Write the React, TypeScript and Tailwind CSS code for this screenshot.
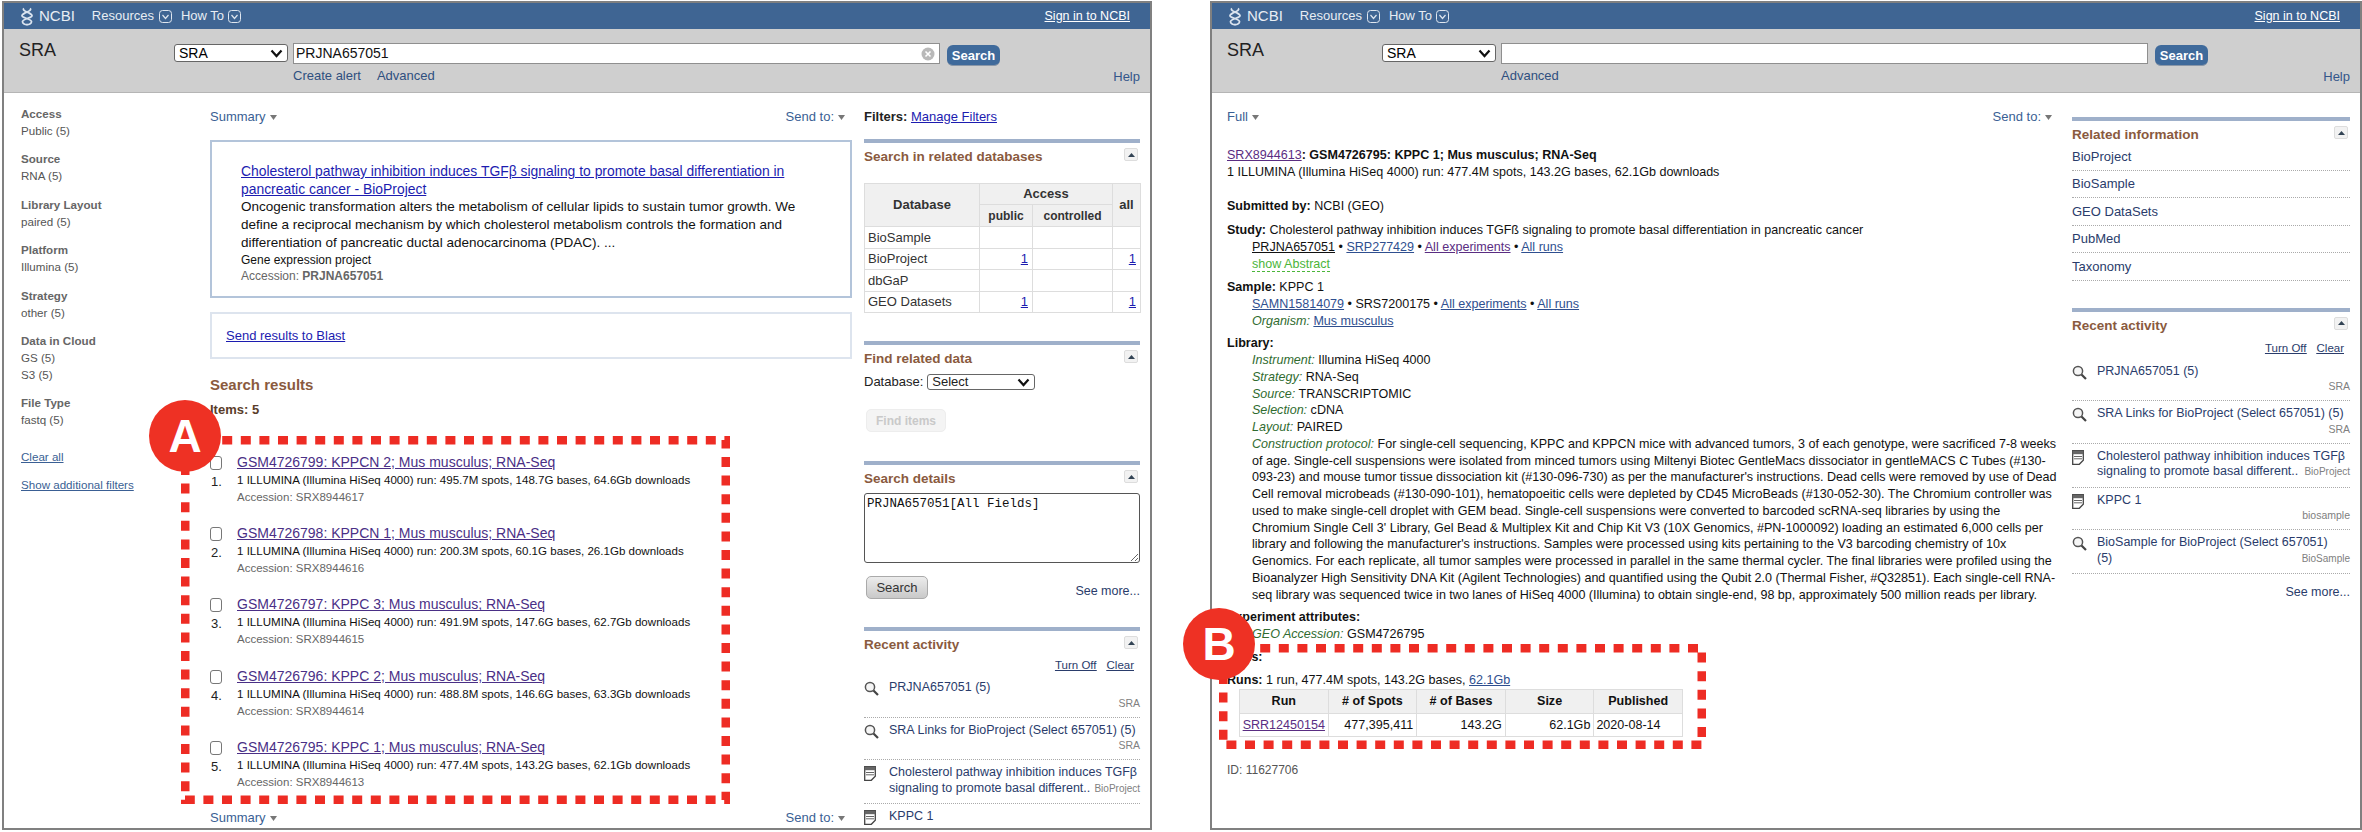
import type { ReactNode } from 'react';

const Chevron = () => (
  <svg width="13" height="13" viewBox="0 0 13 13" fill="none" className="shrink-0">
    <rect x="0.5" y="0.5" width="12" height="12" rx="3" stroke="#dfe6ef" />
    <path d="M3.5 5 6.5 8.5 9.5 5" stroke="#dfe6ef" strokeWidth="1.2" />
  </svg>
);

const Caret = () => (
  <svg width="7" height="5" viewBox="0 0 7 5" className="ml-1 inline-block">
    <path d="M0 0h7L3.5 5z" fill="#777" />
  </svg>
);

const Helix = () => (
  <svg width="16" height="19" viewBox="0 0 16 19" fill="none" className="shrink-0">
    <path d="M11 1.5C14 4 4 5.5 3 8.5c-.8 2.4 9 3 9.5 6 .3 2-3 3.5-5 3" stroke="#dbe4ef" strokeWidth="1.8" />
    <path d="M5 1.5C2 4 12 5.5 13 8.5c.8 2.4-9 3-9.5 6-.3 2 3 3.5 5 3" stroke="#dbe4ef" strokeWidth="1.8" />
  </svg>
);

const SelectBox = ({ label, className }: { label: string; className: string }) => (
  <div className={`flex items-center justify-between bg-white border border-[#666] rounded-[3px] pl-1 pr-1 ${className}`}>
    <span>{label}</span>
    <svg width="13" height="9" viewBox="0 0 13 9" fill="none">
      <path d="M1.5 1.5 6.5 7 11.5 1.5" stroke="#111" strokeWidth="2.2" />
    </svg>
  </div>
);

const Header = ({ value, links, clear }: { value: string; links: ReactNode; clear?: boolean }) => (
  <>
    {/* top bar */}
    <div className="h-[26px] bg-[#3f6593] flex items-center pl-[15px] pr-[20px] text-[13px] text-[#e8edf3]">
      <Helix />
      <span className="ml-[4px] text-[15px] font-light">NCBI</span>
      <span className="ml-[17px]">Resources</span>
      <span className="ml-[5px]"><Chevron /></span>
      <span className="ml-[9px]">How To</span>
      <span className="ml-[4px]"><Chevron /></span>
      <a className="ml-auto underline text-white text-[12.5px]">Sign in to NCBI</a>
    </div>
    {/* search band */}
    <div className="h-[64px] bg-[#cfcfcf] border-b border-[#b5b5b5] flex">
      <div className="w-[170px] pl-[15px] pt-[11px] text-[18px] leading-[20px] text-[#222]">SRA</div>
      <div className="w-[119px] pt-[15px]">
        <SelectBox label="SRA" className="w-[114px] h-[18px] text-[14px]" />
      </div>
      <div className="w-[654px] pt-[14px]">
        <div className="w-[647px] h-[21px] bg-white border border-[#8f8f8f] flex items-center pl-[2px] pr-[4px] text-[14px] text-[#111]">
          <input readOnly value={value} className="flex-1 outline-none bg-transparent min-w-0" />
          {clear && (
            <svg width="14" height="14" viewBox="0 0 14 14">
              <circle cx="7" cy="7" r="6.5" fill="#b9b9b9" />
              <path d="M4.5 4.5l5 5m0-5l-5 5" stroke="#fff" strokeWidth="1.6" />
            </svg>
          )}
        </div>
        <div className="mt-[3px] h-[18px] flex gap-[16px] text-[13px] leading-[18px] text-[#2f4f7f]">{links}</div>
      </div>
      <div className="flex-1 pt-[16px] pr-[10px] flex flex-col">
        <button className="w-[53px] h-[21px] rounded-[6px] bg-[#3f6a9b] border-b border-[#8a97a8] text-white font-bold text-[13px] leading-[19px]">
          Search
        </button>
        <span className="mt-[1px] self-end leading-[18px] text-[13px] text-[#34568a] pt-[1px]">Help</span>
      </div>
    </div>
  </>
);

const Collapse = () => (
  <span className="w-[14px] h-[13px] mr-[2px] bg-[#f2f2f2] border border-[#ddd] rounded-[2px] flex items-center justify-center shrink-0">
    <svg width="7" height="4" viewBox="0 0 7 4"><path d="M0 4h7L3.5 0z" fill="#345" /></svg>
  </span>
);

const Portlet = ({ title, className }: { title: string; className: string }) => (
  <div className={className}>
    <div className="h-[4px] bg-[#9fb0ca]" />
    <div className="mt-[5px] h-[18px] flex justify-between items-start text-[13.5px] leading-[18px] font-bold text-[#8a5a3e]">
      <span>{title}</span>
      <Collapse />
    </div>
  </div>
);

const Magnifier = () => (
  <svg width="15" height="15" viewBox="0 0 15 15" fill="none" className="mt-[1px]">
    <circle cx="6" cy="6" r="4.6" stroke="#555" strokeWidth="1.5" fill="#f6f6f6" />
    <path d="M9.5 9.5 14 14" stroke="#444" strokeWidth="2.2" />
  </svg>
);

const Doc = () => (
  <svg width="12" height="15" viewBox="0 0 12 15" fill="none" className="mt-[1px]">
    <path d="M.7.7h10.6v9.6l-4 4H.7z" stroke="#444" strokeWidth="1.3" fill="#fff" />
    <path d="M.7.7h10.6v3.5H.7z" fill="#666" />
    <path d="M2 6.5h8M2 8.8h8" stroke="#666" />
  </svg>
);

type Activity = { icon: 'search' | 'doc'; lines: string[]; label: string; inline?: boolean };

const ActivityRow = ({ item }: { item: Activity }) => (
  <div className="flex pt-[5px] pb-[7px] border-b border-dotted border-[#aaa]">
    <div className="w-[25px] shrink-0">{item.icon === 'search' ? <Magnifier /> : <Doc />}</div>
    <div className="flex-1 min-w-0 text-[12.5px] leading-[15.5px] text-[#2a3c6b]">
      {item.lines.map((line, i) =>
        item.inline && i === item.lines.length - 1 ? (
          <div key={line} className="flex justify-between items-baseline whitespace-nowrap">
            <span>{line}</span>
            <span className="text-[10px] text-[#808080]">{item.label}</span>
          </div>
        ) : (
          <div key={line} className="whitespace-nowrap">{line}</div>
        )
      )}
      {!item.inline && item.label && <div className="text-right text-[10.5px] leading-[14px] text-[#808080]">{item.label}</div>}
    </div>
  </div>
);

const TurnOff = ({ className }: { className: string }) => (
  <div className={`h-[16px] flex justify-end gap-[10px] pr-[6px] text-[11.5px] leading-[16px] text-[#2a3c6b] underline ${className}`}>
    <a>Turn Off</a>
    <a>Clear</a>
  </div>
);

const filters = [
  { name: 'Access', items: ['Public (5)'] },
  { name: 'Source', items: ['RNA (5)'] },
  { name: 'Library Layout', items: ['paired (5)'] },
  { name: 'Platform', items: ['Illumina (5)'] },
  { name: 'Strategy', items: ['other (5)'] },
  { name: 'Data in Cloud', items: ['GS (5)', 'S3 (5)'] },
  { name: 'File Type', items: ['fastq (5)'] },
];

const results = [
  ['GSM4726799: KPPCN 2; Mus musculus; RNA-Seq', '495.7M spots, 148.7G bases, 64.6Gb downloads', 'SRX8944617'],
  ['GSM4726798: KPPCN 1; Mus musculus; RNA-Seq', '200.3M spots, 60.1G bases, 26.1Gb downloads', 'SRX8944616'],
  ['GSM4726797: KPPC 3; Mus musculus; RNA-Seq', '491.9M spots, 147.6G bases, 62.7Gb downloads', 'SRX8944615'],
  ['GSM4726796: KPPC 2; Mus musculus; RNA-Seq', '488.8M spots, 146.6G bases, 63.3Gb downloads', 'SRX8944614'],
  ['GSM4726795: KPPC 1; Mus musculus; RNA-Seq', '477.4M spots, 143.2G bases, 62.1Gb downloads', 'SRX8944613'],
];

const leftActivity: Activity[] = [
  { icon: 'search', lines: ['PRJNA657051 (5)'], label: 'SRA' },
  { icon: 'search', lines: ['SRA Links for BioProject (Select 657051) (5)'], label: 'SRA' },
  { icon: 'doc', lines: ['Cholesterol pathway inhibition induces TGFβ', 'signaling to promote basal different..'], label: 'BioProject', inline: true },
  { icon: 'doc', lines: ['KPPC 1'], label: '' },
];

const rightActivity: Activity[] = [
  leftActivity[0],
  leftActivity[1],
  leftActivity[2],
  { icon: 'doc', lines: ['KPPC 1'], label: 'biosample' },
  { icon: 'search', lines: ['BioSample for BioProject (Select 657051)', '(5)'], label: 'BioSample', inline: true },
];

const protocol = [
  'For single-cell sequencing, KPPC and KPPCN mice with advanced tumors, 3 of each genotype, were sacrificed 7-8 weeks',
  'of age. Single-cell suspensions were isolated from minced tumors using Miltenyi Biotec GentleMacs dissociator in gentleMACS C Tubes (#130-',
  "093-23) and mouse tumor tissue dissociation kit (#130-096-730) as per the manufacturer's instructions. Dead cells were removed by use of Dead",
  'Cell removal microbeads (#130-090-101), hematopoeitic cells were depleted by CD45 MicroBeads (#130-052-30). The Chromium controller was',
  'used to make single-cell droplet with GEM bead. Single-cell suspensions were converted to barcoded scRNA-seq libraries by using the',
  "Chromium Single Cell 3' Library, Gel Bead & Multiplex Kit and Chip Kit V3 (10X Genomics, #PN-1000092) loading an estimated 6,000 cells per",
  "library and following the manufacturer's instructions. Samples were processed using kits pertaining to the V3 barcoding chemistry of 10x",
  'Genomics. For each replicate, all tumor samples were processed in parallel in the same thermal cycler. The final libraries were profiled using the',
  'Bioanalyzer High Sensitivity DNA Kit (Agilent Technologies) and quantified using the Qubit 2.0 (Thermal Fisher, #Q32851). Each single-cell RNA-',
  'seq library was sequenced twice in two lanes of HiSeq 4000 (Illumina) to obtain single-end, 98 bp, approximately 500 million reads per library.',
];

const Green = ({ children }: { children: ReactNode }) => <i className="text-[#2f6b2f]">{children}</i>;
const BlueLink = ({ children }: { children: ReactNode }) => <a className="text-[#2f4f8f] underline">{children}</a>;

const Line = ({ children, className = '' }: { children: ReactNode; className?: string }) => (
  <div className={`h-[17px] leading-[17px] whitespace-nowrap ${className}`}>{children}</div>
);

const SpecLine = ({ label, value }: { label: string; value: string }) => (
  <div className="h-[16.75px] leading-[16.75px] whitespace-nowrap">
    <Green>{label}</Green> {value}
  </div>
);

const LeftPanel = () => (
  <div className="w-[1150px] h-[829px] ml-[2px] mt-[1px] border-2 border-[#808080] overflow-hidden">
    <Header
      value="PRJNA657051"
      clear
      links={
        <>
          <a>Create alert</a>
          <a>Advanced</a>
        </>
      }
    />
    <div className="flex">
      {/* filters */}
      <div className="w-[206px] pl-[17px] pt-[12px] text-[11.6px] leading-[17px] text-[#555]">
        {filters.map((f) => (
          <div key={f.name} className="mb-[11.4px]">
            <div className="font-bold text-[#666]">{f.name}</div>
            {f.items.map((t) => (
              <div key={t}>{t}</div>
            ))}
          </div>
        ))}
        <div className="mt-[20px] text-[#3a5f94] underline">Clear all</div>
        <div className="mt-[11px] text-[#3a5f94] underline">Show additional filters</div>
      </div>
      {/* results */}
      <div className="w-[642px] pt-[15px]">
        <div className="h-[18px] flex justify-between pr-[7px] text-[13px] leading-[18px] text-[#3a5f94]">
          <span>Summary<Caret /></span>
          <span>Send to:<Caret /></span>
        </div>
        <div className="mt-[14px] h-[158px] border-2 border-[#b3c4da] pl-[29px] pt-[20px] text-[13.5px] leading-[18px] text-[#111]">
          <a className="text-[13.9px] text-[#1c1cb0] underline block">
            Cholesterol pathway inhibition induces TGFβ signaling to promote basal differentiation in
            <br />
            pancreatic cancer - BioProject
          </a>
          <p>
            Oncogenic transformation alters the metabolism of cellular lipids to sustain tumor growth. We
            <br />
            define a reciprocal mechanism by which cholesterol metabolism controls the formation and
            <br />
            differentiation of pancreatic ductal adenocarcinoma (PDAC). ...
          </p>
          <p className="text-[12px] leading-[16px]">Gene expression project</p>
          <p className="text-[12px] leading-[16px] text-[#666]">
            Accession: <b>PRJNA657051</b>
          </p>
        </div>
        <div className="mt-[14px] h-[47px] border-2 border-[#dde4ee] flex items-center pl-[14px] text-[13px] text-[#1c1cb0] underline">
          Send results to Blast
        </div>
        <div className="mt-[16px] h-[20px] text-[15px] leading-[20px] font-bold text-[#8a5a3e]">Search results</div>
        <div className="mt-[7px] h-[16px] text-[13px] leading-[16px] font-bold text-[#5a3d2a]">Items: 5</div>
        <div className="mt-[35px]">
          {results.map((r, i) => (
            <div key={r[2]} className="h-[71.2px] flex">
              <div className="w-[27px] text-[13px] leading-[16px] text-[#222]">
                <input type="checkbox" readOnly className="appearance-none block mt-[3px] w-[12px] h-[14px] bg-white border border-[#777] rounded-[3px]" />
                <div className="mt-[4px] pl-[1px]">{i + 1}.</div>
              </div>
              <div>
                <a className="block h-[19px] text-[14px] leading-[19px] text-[#4a2f86] underline">{r[0]}</a>
                <div className="h-[17px] text-[11.55px] leading-[17px] text-[#111]">1 ILLUMINA (Illumina HiSeq 4000) run: {r[1]}</div>
                <div className="h-[16px] text-[11.5px] leading-[16px] text-[#666]">Accession: {r[2]}</div>
              </div>
            </div>
          ))}
        </div>
        <div className="h-[18px] flex justify-between pr-[7px] text-[13px] leading-[18px] text-[#3a5f94]">
          <span>Summary<Caret /></span>
          <span>Send to:<Caret /></span>
        </div>
      </div>
      {/* right column */}
      <div className="w-[276px] ml-[12px] pt-[15px] text-[13px]">
        <div className="h-[18px] leading-[18px]">
          <b className="text-[#222]">Filters:</b> <a className="text-[#1c1cb0] underline">Manage Filters</a>
        </div>
        <Portlet title="Search in related databases" className="mt-[13px]" />
        <table className="mt-[17px] w-[276px] table-fixed border-collapse text-[13px] text-[#333]">
          <colgroup>
            <col className="w-[115px]" />
            <col className="w-[53px]" />
            <col className="w-[80px]" />
            <col className="w-[28px]" />
          </colgroup>
          <thead className="bg-[#f0f0f0] font-bold">
            <tr className="h-[21px]">
              <th rowSpan={2} className="border border-[#ddd]">Database</th>
              <th colSpan={2} className="border border-[#ddd]">Access</th>
              <th rowSpan={2} className="border border-[#ddd]">all</th>
            </tr>
            <tr className="h-[22px] text-[12px]">
              <th className="border border-[#ddd]">public</th>
              <th className="border border-[#ddd]">controlled</th>
            </tr>
          </thead>
          <tbody>
            {[
              ['BioSample', false],
              ['BioProject', true],
              ['dbGaP', false],
              ['GEO Datasets', true],
            ].map(([name, hit]) => (
              <tr key={name as string} className="h-[21.5px]">
                <td className="border border-[#ddd] pl-[3px]">{name}</td>
                <td className="border border-[#ddd] text-right pr-[4px] text-[#1c1cb0] underline">{hit ? '1' : ''}</td>
                <td className="border border-[#ddd]" />
                <td className="border border-[#ddd] text-right pr-[4px] text-[#1c1cb0] underline">{hit ? '1' : ''}</td>
              </tr>
            ))}
          </tbody>
        </table>
        <Portlet title="Find related data" className="mt-[28px]" />
        <div className="mt-[5px] h-[18px] flex items-center gap-[4px] text-[#222]">
          <span>Database:</span>
          <SelectBox label="Select" className="w-[108px] h-[16px] text-[13px] pl-[4px]" />
        </div>
        <button className="mt-[18px] ml-[2px] w-[80px] h-[23px] rounded-[5px] bg-[#f4f4f4] border border-[#ededed] text-[#c9c9c9] font-bold text-[12px]">
          Find items
        </button>
        <Portlet title="Search details" className="mt-[29px]" />
        <textarea
          readOnly
          value="PRJNA657051[All Fields]"
          className="block mt-[5px] w-[276px] h-[70px] border border-[#555] rounded-[3px] px-[2px] py-[2px] font-['Liberation_Mono',monospace] text-[12.5px] leading-[16px] text-[#111] outline-none"
        />
        <div className="mt-[13px] flex justify-between items-end">
          <button className="ml-[2px] w-[62px] h-[23px] rounded-[5px] bg-gradient-to-b from-[#ececec] to-[#c9c9c9] border border-[#aaa] text-[#333] text-[13px]">
            Search
          </button>
          <a className="text-[#2a3c6b] text-[12.5px] leading-[16px]">See more...</a>
        </div>
        <Portlet title="Recent activity" className="mt-[28px]" />
        <TurnOff className="mt-[3px]" />
        <div className="mt-[2px]">
          {leftActivity.map((a) => (
            <ActivityRow key={a.lines[0]} item={a} />
          ))}
        </div>
      </div>
    </div>
  </div>
);

const RightPanel = () => (
  <div className="w-[1152px] h-[829px] ml-[58px] mt-[1px] border-2 border-[#808080] overflow-hidden">
    <Header value="" links={<a>Advanced</a>} />
    <div className="flex">
      <div className="w-[840px] pl-[15px] pt-[15px] text-[12.55px] text-[#111]">
        <div className="h-[18px] flex justify-between text-[13px] text-[#3a5f94] leading-[18px]">
          <span>Full<Caret /></span>
          <span>Send to:<Caret /></span>
        </div>
        <Line className="mt-[21px]">
          <a className="text-[#5a2d82] underline">SRX8944613</a>
          <b>: GSM4726795: KPPC 1; Mus musculus; RNA-Seq</b>
        </Line>
        <Line>1 ILLUMINA (Illumina HiSeq 4000) run: 477.4M spots, 143.2G bases, 62.1Gb downloads</Line>
        <Line className="mt-[17px]"><b>Submitted by:</b> NCBI (GEO)</Line>
        <Line className="mt-[7px]"><b>Study:</b> Cholesterol pathway inhibition induces TGFß signaling to promote basal differentiation in pancreatic cancer</Line>
        <div className="pl-[25px]">
          <Line>
            <a className="underline">PRJNA657051</a> • <BlueLink>SRP277429</BlueLink> • <a className="text-[#5a2d82] underline">All experiments</a> • <BlueLink>All runs</BlueLink>
          </Line>
          <Line><span className="text-[#4bb53a] border-b border-dashed border-[#4bb53a]">show Abstract</span></Line>
        </div>
        <Line className="mt-[6px]"><b>Sample:</b> KPPC 1</Line>
        <div className="pl-[25px]">
          <Line>
            <BlueLink>SAMN15814079</BlueLink> • SRS7200175 • <BlueLink>All experiments</BlueLink> • <BlueLink>All runs</BlueLink>
          </Line>
          <Line><Green>Organism:</Green> <BlueLink>Mus musculus</BlueLink></Line>
        </div>
        <Line className="mt-[5px]"><b>Library:</b></Line>
        <div className="pl-[25px]">
          <SpecLine label="Instrument:" value="Illumina HiSeq 4000" />
          <SpecLine label="Strategy:" value="RNA-Seq" />
          <SpecLine label="Source:" value="TRANSCRIPTOMIC" />
          <SpecLine label="Selection:" value="cDNA" />
          <SpecLine label="Layout:" value="PAIRED" />
          {protocol.map((line, i) =>
            i === 0 ? <SpecLine key={line} label="Construction protocol:" value={line} /> : (
              <div key={line} className="h-[16.75px] leading-[16.75px] whitespace-nowrap">{line}</div>
            )
          )}
        </div>
        <Line className="mt-[6px]"><b>Experiment attributes:</b></Line>
        <div className="pl-[25px]">
          <Line><Green>GEO Accession:</Green> GSM4726795</Line>
        </div>
        <Line className="mt-[6px]"><b>Runs:</b></Line>
        <Line className="mt-[6px]">
          <b>Runs:</b> 1 run, 477.4M spots, 143.2G bases, <BlueLink>62.1Gb</BlueLink>
        </Line>
        <table className="ml-[12px] w-[444px] table-fixed border-collapse text-[12.55px]">
          <thead className="bg-[#f0f0f0]">
            <tr className="h-[24px]">
              {['Run', '# of Spots', '# of Bases', 'Size', 'Published'].map((h) => (
                <th key={h} className="border border-[#ddd] font-bold">{h}</th>
              ))}
            </tr>
          </thead>
          <tbody>
            <tr className="h-[23px]">
              <td className="border border-[#ddd] text-center text-[#5a2d82] underline">SRR12450154</td>
              <td className="border border-[#ddd] text-right pr-[3px]">477,395,411</td>
              <td className="border border-[#ddd] text-right pr-[3px]">143.2G</td>
              <td className="border border-[#ddd] text-right pr-[3px]">62.1Gb</td>
              <td className="border border-[#ddd] pl-[2px]">2020-08-14</td>
            </tr>
          </tbody>
        </table>
        <div className="mt-[25px] h-[17px] leading-[17px] text-[12px] text-[#555]">ID: 11627706</div>
      </div>
      <div className="w-[278px] ml-[20px] pt-[24px] text-[13px]">
        <Portlet title="Related information" className="" />
        <div className="-mt-[1px]">
          {['BioProject', 'BioSample', 'GEO DataSets', 'PubMed', 'Taxonomy'].map((t) => (
            <div key={t} className="h-[27.5px] flex items-center border-b border-dotted border-[#aaa] text-[#2a3c6b]">{t}</div>
          ))}
        </div>
        <Portlet title="Recent activity" className="mt-[27px]" />
        <TurnOff className="mt-[5px]" />
        <div className="mt-[3px]">
          {rightActivity.map((a) => (
            <ActivityRow key={a.lines[0] + a.label} item={a} />
          ))}
        </div>
        <div className="mt-[9px] text-right text-[12.5px] text-[#2a3c6b]">See more...</div>
      </div>
    </div>
  </div>
);

const Callout = ({ letter, className }: { letter: string; className: string }) => (
  <div className={`absolute w-[72px] h-[72px] rounded-full bg-[#ee3124] flex items-center justify-center text-white font-bold text-[46px] ${className}`}>
    {letter}
  </div>
);

export default function App() {
  return (
    <div className="relative w-[2362px] h-[832px] bg-white overflow-hidden flex items-start font-['Liberation_Sans',Arial,sans-serif]">
      <LeftPanel />
      <RightPanel />

      {/* red callouts over the page */}
      <svg className="absolute left-[181px] top-[436px]" width="549" height="368" fill="none">
        <rect x="4" y="4" width="541" height="360" stroke="#ee2c24" strokeWidth="9" strokeDasharray="10 8.6" />
      </svg>
      <svg className="absolute left-[1219px] top-[644px]" width="487" height="105" fill="none">
        <rect x="4" y="4" width="479" height="97" stroke="#ee2c24" strokeWidth="9" strokeDasharray="10 8.6" />
      </svg>
      <Callout letter="A" className="left-[149px] top-[400px]" />
      <Callout letter="B" className="left-[1183px] top-[608px]" />
    </div>
  );
}
